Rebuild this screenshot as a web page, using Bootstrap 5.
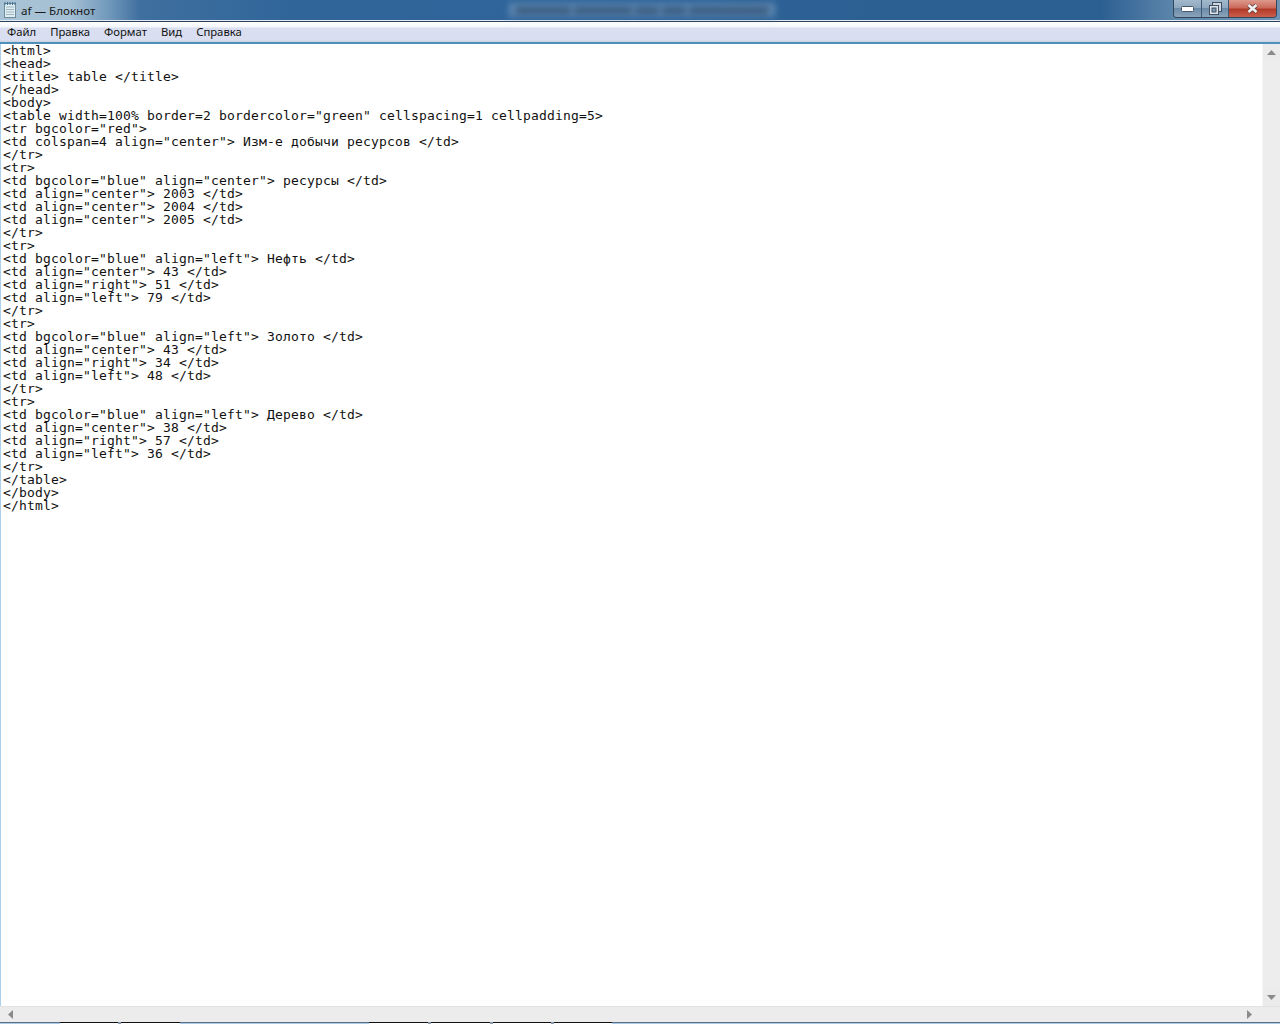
<!DOCTYPE html>
<html lang="ru">
<head>
<meta charset="utf-8">
<title>af — Блокнот</title>
<link rel="stylesheet" href="https://cdn.jsdelivr.net/npm/bootstrap@5.3.0/dist/css/bootstrap.min.css">
<style>
html,body{height:1024px;overflow:hidden;background:#fff}
.win-frame{height:1024px;width:1280px;font-family:"Noto Sans","Liberation Sans",sans-serif}
.title-bar{height:20px;flex:none;background:linear-gradient(90deg,#a9c3d6 0,#a5c0d4 70px,#6f97ba 110px,#3f6f9f 140px,#30659a 300px,#2f649a 600px,#2c5f92 900px,#2c5f92 1100px,#5d86ab 1175px,#6f94b4 1280px)}
.title-icon{width:14px;height:16px;margin:2px 0 0 3px}
.title-text{font-size:11.6px;line-height:22px;color:#1a1a1a;margin-left:4px;width:130px}
.title-blur{margin:3px 0 0 358px;width:266px;height:14px;background:#5f8ab4;filter:blur(3px);display:flex;align-items:center;justify-content:space-around;padding:0 4px}
.title-blur i{display:block;height:7px;background:#38587c;flex:none}
.win-btns{margin-right:3px;height:18px;border:1px solid #34465a;border-top:0;border-radius:0 0 4px 4px;overflow:hidden}
.win-b{height:17px;display:flex;align-items:center;justify-content:center;border-right:1px solid #3f5a75;background:linear-gradient(#a3b9cc 0,#8fa8bf 45%,#6c8ba8 50%,#8aa4ba 100%)}
.win-min{width:28px}.win-max{width:27px}
.win-close{width:47px;border-right:0;background:linear-gradient(#dd9a8e 0,#cb6a5a 45%,#b23a28 55%,#c9604c 100%)}
.rule-a{height:1px;background:#e4ebf3;flex:none}
.rule-b{height:1px;background:#29415c;flex:none}
.menu-bar{height:20px;flex:none;background:linear-gradient(#fff 0,#f4f6fb 25%,#d9dff0 30%,#d9dff0 90%,#c9d0df 100%);font-size:11.3px;color:#111;padding-left:7px;gap:14px;line-height:20px}
.menu-rule{height:2px;flex:none;background:#4f8fbd}
.edit-row{flex:1 1 auto;min-height:0}
.edit-area{flex:1 1 auto;border-left:1px solid #a9d0ee;overflow:hidden;background:#fff}
.code-text{margin:0;padding:0 0 0 2px;font-family:"DejaVu Sans Mono","Liberation Mono",monospace;font-size:13px;line-height:13px;letter-spacing:.174px;color:#111;white-space:pre;overflow:hidden}
.v-scroll{width:18px;flex:none;background:#ededed;border-left:1px solid #f6f6f6}
.sb-cap{height:17px;background:#ebebeb;display:flex;align-items:center;justify-content:center}
.h-scroll{height:16px;flex:none;background:#ececec;border-top:1px solid #e2e2e2;padding:0 4px 0 8px}
.task-strip{height:2px;flex:none}
.seg-blue{background:#a9cbe8;border-top:1px solid #5a6f85}
.seg-white{background:#fff;border-top:1px solid #111}
.seg-sep{background:#8a9aaa;flex:0 0 3px}
.seg-w58{flex:0 0 58px}
.seg-w59{flex:0 0 59px}
.seg-w60{flex:0 0 60px}
.seg-w189{flex:0 0 189px}
.seg-fill{flex:1 1 auto}
</style>
</head>
<body>
<div class="win-frame d-flex flex-column">
  <div class="title-bar d-flex">
    <svg class="title-icon" viewBox="0 0 14 16"><rect x="1.5" y="1.5" width="11" height="14" fill="#dfeef2" stroke="#6f8a99"/><path d="M3 5h8M3 7.5h8M3 10h8M3 12.5h8" stroke="#9fb4c0"/><path d="M2 0v3M4.500 0v3M7 0v3M9.500 0v3M12 0v3" stroke="#3f6f8f"/></svg>
    <div class="title-text">af — Блокнот</div>
    <div class="title-blur"><i style="width:56px"></i><i style="width:58px"></i><i style="width:24px"></i><i style="width:24px"></i><i style="width:80px"></i></div>
    <div class="win-btns d-flex ms-auto">
      <div class="win-b win-min"><svg width="13" height="6"><rect x=".5" y=".5" width="12" height="5" rx="1" fill="#fff" stroke="#45586c"/></svg></div>
      <div class="win-b win-max"><svg width="13" height="13"><rect x="3.500" y=".5" width="9" height="9" fill="#cfd8e2" stroke="#3f4f60"/><rect x=".5" y="3.500" width="9" height="9" fill="#dfe6ee" stroke="#3f4f60"/><rect x="3" y="6" width="4" height="4" fill="#7f9ab2" stroke="#3f4f60"/></svg></div>
      <div class="win-b win-close"><svg width="13" height="11" viewBox="0 0 13 11"><path d="M2.500 2 10.500 9M10.500 2 2.500 9" stroke="#5a3a3a" stroke-width="4"/><path d="M2.500 2 10.500 9M10.500 2 2.500 9" stroke="#f2f2f2" stroke-width="2.600"/></svg></div>
    </div>
  </div>
  <div class="rule-a"></div>
  <div class="rule-b"></div>
  <div class="menu-bar d-flex"><span>Файл</span><span>Правка</span><span>Формат</span><span>Вид</span><span>Справка</span></div>
  <div class="menu-rule"></div>
  <div class="edit-row d-flex">
    <div class="edit-area">
<pre class="code-text">&lt;html&gt;
&lt;head&gt;
&lt;title&gt; table &lt;/title&gt;
&lt;/head&gt;
&lt;body&gt;
&lt;table width=100% border=2 bordercolor="green" cellspacing=1 cellpadding=5&gt;
&lt;tr bgcolor="red"&gt;
&lt;td colspan=4 align="center"&gt; Изм-е добычи ресурсов &lt;/td&gt;
&lt;/tr&gt;
&lt;tr&gt;
&lt;td bgcolor="blue" align="center"&gt; ресурсы &lt;/td&gt;
&lt;td align="center"&gt; 2003 &lt;/td&gt;
&lt;td align="center"&gt; 2004 &lt;/td&gt;
&lt;td align="center"&gt; 2005 &lt;/td&gt;
&lt;/tr&gt;
&lt;tr&gt;
&lt;td bgcolor="blue" align="left"&gt; Нефть &lt;/td&gt;
&lt;td align="center"&gt; 43 &lt;/td&gt;
&lt;td align="right"&gt; 51 &lt;/td&gt;
&lt;td align="left"&gt; 79 &lt;/td&gt;
&lt;/tr&gt;
&lt;tr&gt;
&lt;td bgcolor="blue" align="left"&gt; Золото &lt;/td&gt;
&lt;td align="center"&gt; 43 &lt;/td&gt;
&lt;td align="right"&gt; 34 &lt;/td&gt;
&lt;td align="left"&gt; 48 &lt;/td&gt;
&lt;/tr&gt;
&lt;tr&gt;
&lt;td bgcolor="blue" align="left"&gt; Дерево &lt;/td&gt;
&lt;td align="center"&gt; 38 &lt;/td&gt;
&lt;td align="right"&gt; 57 &lt;/td&gt;
&lt;td align="left"&gt; 36 &lt;/td&gt;
&lt;/tr&gt;
&lt;/table&gt;
&lt;/body&gt;
&lt;/html&gt;</pre>
    </div>
    <div class="v-scroll d-flex flex-column justify-content-between">
      <div class="sb-cap"><svg width="9" height="5"><path d="M4.500 0 9 5H0z" fill="#8a8a8a"/></svg></div>
      <div class="sb-cap"><svg width="9" height="5"><path d="M0 0h9L4.500 5z" fill="#8a8a8a"/></svg></div>
    </div>
  </div>
  <div class="h-scroll d-flex align-items-center justify-content-between">
    <svg width="5" height="9"><path d="M5 0v9L0 4.500z" fill="#8a8a8a"/></svg>
    <svg class="me-4" width="5" height="9"><path d="M0 0v9l5-4.500z" fill="#8a8a8a"/></svg>
  </div>
  <div class="task-strip d-flex">
    <div class="seg-blue seg-w60"></div><div class="seg-white seg-w58"></div><div class="seg-sep"></div><div class="seg-white seg-w59"></div><div class="seg-blue seg-w189"></div><div class="seg-white seg-w59"></div><div class="seg-sep"></div><div class="seg-white seg-w59"></div><div class="seg-sep"></div><div class="seg-white seg-w58"></div><div class="seg-sep"></div><div class="seg-white seg-w58"></div><div class="seg-blue seg-fill"></div>
  </div>
</div>
</body>
</html>
